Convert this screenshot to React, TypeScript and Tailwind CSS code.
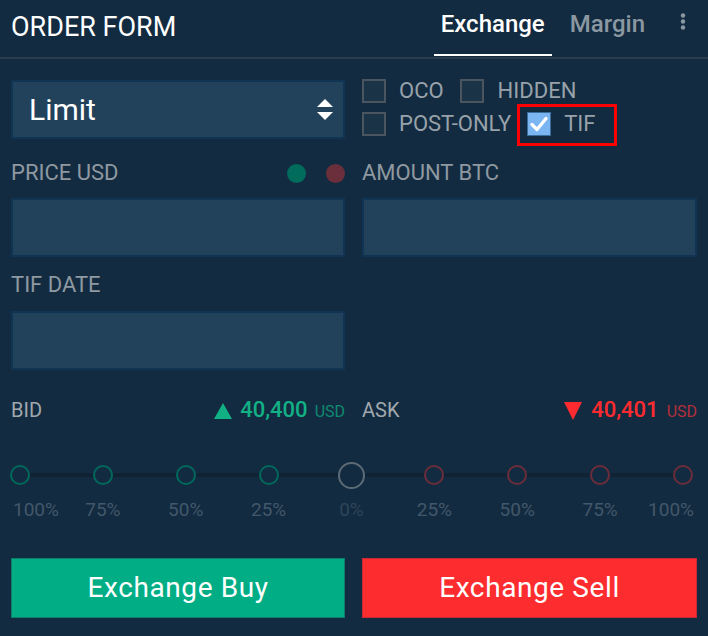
import React from "react";

const Box = ({ checked }: { checked?: boolean }) =>
  checked ? (
    <span className="flex h-[24px] w-[24px] items-center justify-center border border-[#3a6e9c] bg-[#7cb6f2]">
      <svg width="18" height="16" viewBox="0 0 18 16">
        <path d="M2 8.5 L7 13.5 L16 2.5" fill="none" stroke="#ffffff" strokeWidth="3.2" strokeLinecap="round" strokeLinejoin="round" />
      </svg>
    </span>
  ) : (
    <span className="block h-[24px] w-[24px] border-2 border-[#4a5560] bg-[#1b3346]" />
  );

const steps = [
  { label: "100%", side: "buy" },
  { label: "75%", side: "buy" },
  { label: "50%", side: "buy" },
  { label: "25%", side: "buy" },
  { label: "0%", side: "zero" },
  { label: "25%", side: "sell" },
  { label: "50%", side: "sell" },
  { label: "75%", side: "sell" },
  { label: "100%", side: "sell" },
];

export default function App() {
  return (
    <div className="h-[636px] w-[708px] overflow-hidden bg-[#132b40] font-['Roboto','Liberation_Sans',sans-serif]">
      {/* header */}
      <div className="flex h-[59px] border-b-2 border-[#2a3d4e] pl-[11px] pr-[22px]">
        <div className="mt-[11px] flex-1 text-[27px] leading-[32px] text-white">ORDER FORM</div>
        <div className="flex h-[56px] border-b-2 border-white px-[7px] pt-[11px] text-[24px] font-medium leading-[26px] text-white">
          Exchange
        </div>
        <div className="ml-[11px] px-[7px] pt-[11px] text-[24px] font-medium leading-[26px] text-[#8b98a2]">Margin</div>
        <div className="ml-[28px] pt-[13px]">
          <svg width="6" height="17" viewBox="0 0 6 17">
            <circle cx="3" cy="2.5" r="2.2" fill="#8b98a2" />
            <circle cx="3" cy="8.5" r="2.2" fill="#8b98a2" />
            <circle cx="3" cy="14.5" r="2.2" fill="#8b98a2" />
          </svg>
        </div>
      </div>

      <div className="px-[11px]">
        {/* type + flags */}
        <div className="mt-[21px] grid grid-cols-[334px_335px] gap-x-[17px]">
          <div className="flex h-[59px] items-center justify-between border-2 border-[#0f3454] bg-[#22425b] pl-[16px] pr-[10px]">
            <span className="text-[30px] leading-[34px] text-white">Limit</span>
            <svg width="16" height="21" viewBox="0 0 16 21">
              <path d="M8 0 L16 8 L0 8 Z" fill="#ffffff" />
              <path d="M0 13 L16 13 L8 21 Z" fill="#ffffff" />
            </svg>
          </div>
          <div className="mt-[-1px] flex flex-col gap-[9px] text-[22px] leading-[24px] text-[#98a2aa]">
            <div className="flex h-[24px] items-center">
              <Box />
              <span className="ml-[13px]">OCO</span>
              <span className="ml-[16px]"><Box /></span>
              <span className="ml-[14px]">HIDDEN</span>
            </div>
            <div className="flex h-[24px] items-center">
              <Box />
              <span className="ml-[13px]">POST-ONLY</span>
              <div className="relative ml-[16px] flex items-center">
                <Box checked />
                <span className="ml-[13px]">TIF</span>
                <span className="absolute left-[-10px] top-[-8px] h-[42px] w-[100px] border-[3px] border-[#ff0000]" />
              </div>
            </div>
          </div>
        </div>

        {/* price / amount */}
        <div className="mt-[21px] grid grid-cols-[334px_335px] gap-x-[17px] text-[22px] leading-[26px] text-[#8e99a1]">
          <div className="flex items-center">
            <span className="flex-1">PRICE USD</span>
            <span className="h-[19px] w-[19px] rounded-full bg-[#016b5c]" />
            <span className="ml-[20px] h-[19px] w-[19px] rounded-full bg-[#6b2f3c]" />
          </div>
          <div>AMOUNT BTC</div>
          <div className="mt-[12px] h-[59px] border-2 border-[#0f3454] bg-[#22425b]" />
          <div className="mt-[12px] h-[59px] border-2 border-[#0f3454] bg-[#22425b]" />
          <div className="mt-[15px]">TIF DATE</div>
          <div />
          <div className="mt-[13px] h-[59px] border-2 border-[#0f3454] bg-[#22425b]" />
          <div />
        </div>

        {/* bid / ask */}
        <div className="mt-[28px] grid grid-cols-[334px_335px] gap-x-[17px] text-[20px] leading-[24px]">
          <div className="flex items-baseline">
            <span className="flex-1 text-[#a0a8ae]">BID</span>
            <svg width="18" height="16" viewBox="0 0 18 16" className="mr-[8px] self-center">
              <path d="M9 0 L18 16 L0 16 Z" fill="#12b085" />
            </svg>
            <span className="text-[22px] font-medium text-[#12b085]">40,400</span>
            <span className="ml-[7px] text-[16px] text-[#0e8a70]">USD</span>
          </div>
          <div className="flex items-baseline">
            <span className="flex-1 text-[#a0a8ae]">ASK</span>
            <svg width="18" height="18" viewBox="0 0 18 18" className="mr-[9px] self-center">
              <path d="M0 0 L18 0 L9 18 Z" fill="#fd2b30" />
            </svg>
            <span className="text-[22px] font-medium text-[#fd2b30]">40,401</span>
            <span className="ml-[8px] text-[16px] text-[#b1303b]">USD</span>
          </div>
        </div>

        {/* slider */}
        <div className="relative ml-[-5px] mt-[37px] w-[691px]">
          <div className="absolute left-[14px] right-[14px] top-[12px] h-[4px] bg-[#0f2335]" />
          <div className="relative flex justify-between">
            {steps.map((s, i) => (
              <div key={i} className="flex h-[28px] w-[28px] items-center justify-center">
                {s.side === "zero" ? (
                  <span className="h-[27px] w-[27px] rounded-full border-2 border-[#5d6b77] bg-[#132b40]" />
                ) : (
                  <span
                    className={
                      s.side === "buy"
                        ? "h-[20px] w-[20px] rounded-full border-2 border-[#01695b] bg-[#132b40]"
                        : "h-[20px] w-[20px] rounded-full border-2 border-[#6c2d3a] bg-[#132b40]"
                    }
                  />
                )}
              </div>
            ))}
          </div>
          <div className="mt-[10px] flex justify-between text-[19px] leading-[22px]">
            {steps.map((s, i) => (
              <div
                key={i}
                className={
                  i === 0
                    ? "flex w-[28px] justify-start pl-[7px]"
                    : i === 8
                    ? "flex w-[28px] justify-end pr-[3px]"
                    : "flex w-[28px] justify-center"
                }
              >
                <span className={s.side === "zero" ? "whitespace-nowrap text-[#2e4558]" : "whitespace-nowrap text-[#42576a]"}>
                  {s.label}
                </span>
              </div>
            ))}
          </div>
        </div>

        {/* buttons */}
        <div className="mt-[37px] grid grid-cols-[334px_335px] gap-x-[17px]">
          <button className="flex h-[60px] items-center justify-center border border-[#0c7e6e] bg-[#00ad85] text-[28px] tracking-[0.6px] text-white">
            Exchange Buy
          </button>
          <button className="flex h-[60px] items-center justify-center border border-[#c62a37] bg-[#fd2c2f] text-[28px] tracking-[0.6px] text-white">
            Exchange Sell
          </button>
        </div>
      </div>
    </div>
  );
}
